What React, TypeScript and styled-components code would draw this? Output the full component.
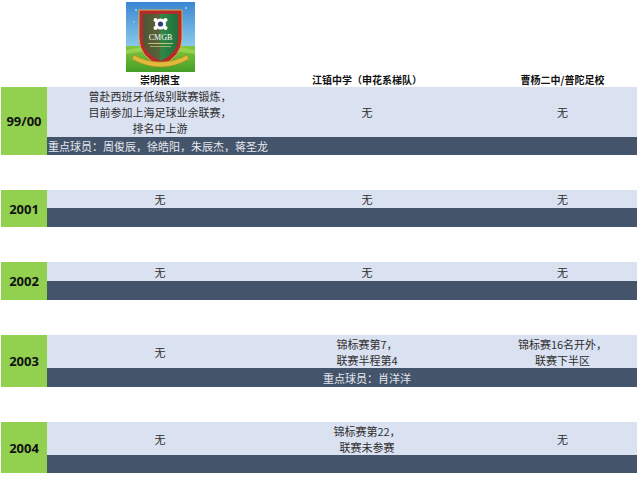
import React from "react";
import styled, { createGlobalStyle } from "styled-components";

const Global = createGlobalStyle`
  html, body { margin: 0; padding: 0; background: #ffffff; }
  body { font-family: "Noto Sans CJK SC", "Noto Sans", sans-serif; }
`;

const COLS = "226px 188px 1fr";

const Page = styled.div`
  width: 636px;
  padding-left: 1px;
  display: flex;
  flex-direction: column;
  gap: 35px;
`;

const Header = styled.div`
  display: grid;
  grid-template-columns: 46px ${COLS};
  height: 87px;
  margin-bottom: -35px;
`;

const HeadCell = styled.div<{ $shift?: number }>`
  display: flex;
  flex-direction: column;
  align-items: center;
  justify-content: flex-end;
  padding-left: ${(p) => p.$shift ?? 0}px;
`;

const HeadLabel = styled.div`
  font-size: 10px;
  font-weight: 700;
  line-height: 14px;
  color: #111;
  white-space: nowrap;
`;

const LogoBox = styled.div`
  width: 69px;
  height: 70px;
  margin-bottom: 1px;
`;

const Block = styled.div`
  display: grid;
  grid-template-columns: 46px 1fr;
`;

const Year = styled.div`
  background: #92d050;
  display: flex;
  align-items: center;
  justify-content: center;
  font-family: "Open Sans", "Noto Sans", sans-serif;
  font-weight: 700;
  font-size: 13px;
  color: #111;
`;

const Body = styled.div`
  display: flex;
  flex-direction: column;
`;

const Results = styled.div<{ $h: number }>`
  display: grid;
  grid-template-columns: ${COLS};
  height: ${(p) => p.$h}px;
  background: #dae1f1;
`;

const Cell = styled.div<{ $shift?: number }>`
  display: flex;
  flex-direction: column;
  align-items: center;
  justify-content: center;
  text-align: center;
  font-size: 11px;
  line-height: 16px;
  color: #2e2e2e;
  padding-left: ${(p) => p.$shift ?? 0}px;
  white-space: nowrap;
`;

const NoteBar = styled.div<{ $h: number }>`
  display: grid;
  grid-template-columns: ${COLS};
  height: ${(p) => p.$h}px;
  background: #44546a;
  align-items: center;
`;

const Note = styled.div<{ $span?: boolean }>`
  grid-column: ${(p) => (p.$span ? "1 / 4" : "2 / 3")};
  text-align: ${(p) => (p.$span ? "left" : "center")};
  padding-left: ${(p) => (p.$span ? "1px" : "0")};
  font-size: 11px;
  line-height: 16px;
  color: #e4e8ee;
  white-space: nowrap;
`;

const Logo = () => (
  <svg width="69" height="70" viewBox="0 0 69 70">
    <defs>
      <linearGradient id="sky" x1="0" y1="0" x2="0" y2="1">
        <stop offset="0" stopColor="#3a86d2" />
        <stop offset="0.6" stopColor="#86c6ea" />
        <stop offset="1" stopColor="#c6e8f4" />
      </linearGradient>
      <linearGradient id="grass" x1="0" y1="0" x2="0" y2="1">
        <stop offset="0" stopColor="#82c840" />
        <stop offset="1" stopColor="#459e26" />
      </linearGradient>
      <linearGradient id="shield" x1="0" y1="0" x2="1" y2="0">
        <stop offset="0" stopColor="#236f3c" />
        <stop offset="0.5" stopColor="#2f8a47" />
        <stop offset="1" stopColor="#236f3c" />
      </linearGradient>
    </defs>
    <rect width="69" height="70" fill="url(#sky)" />
    <rect y="44" width="69" height="26" fill="url(#grass)" />
    <path d="M0 48 Q34 40 69 48 L69 52 Q34 45 0 52 Z" fill="#a8dd5a" opacity="0.6" />
    <path d="M13 8 L56 8 L56 36 Q56 55 34.5 64 Q13 55 13 36 Z" fill="#b52a2a" stroke="#d9b44a" strokeWidth="1" />
    <path d="M17 12 L52 12 L52 36 Q52 51 34.5 59 Q17 51 17 36 Z" fill="url(#shield)" />
    <path d="M17 12 L34.5 12 L34.5 59 Q17 51 17 36 Z" fill="#a42424" opacity="0.35" />
    <circle cx="34.5" cy="22" r="5.5" fill="#ffffff" />
    <circle cx="34.5" cy="22" r="2.6" fill="#2a3f7a" />
    <circle cx="29.5" cy="18" r="2" fill="#ffffff" />
    <circle cx="39.5" cy="18" r="2" fill="#ffffff" />
    <circle cx="29.5" cy="26" r="2" fill="#ffffff" />
    <circle cx="39.5" cy="26" r="2" fill="#ffffff" />
    <text x="34.5" y="38" textAnchor="middle" fontFamily="Liberation Serif, serif" fontSize="8" fill="#ffffff">CMGB</text>
    <rect x="22" y="41" width="25" height="1" fill="#e8d58a" opacity="0.8" />
    <rect x="24" y="44" width="21" height="1" fill="#e8d58a" opacity="0.6" />
    <path d="M8 53 Q20 60 34.5 60 Q49 60 61 53 L63 57 Q49 65 34.5 65 Q20 65 6 57 Z" fill="#e2b93b" stroke="#a9811e" strokeWidth="0.5" />
    <circle cx="10" cy="8" r="0.8" fill="#ffffff" />
    <circle cx="60" cy="6" r="0.8" fill="#ffffff" />
    <circle cx="8" cy="20" r="0.6" fill="#ffffff" />
  </svg>
);

type Row = {
  year: string;
  h: number;
  nh: number;
  cells: string[][];
  note?: string;
  noteSpan?: boolean;
};

const rows: Row[] = [
  {
    year: "99/00",
    h: 50,
    nh: 18,
    cells: [["曾赴西班牙低级别联赛锻炼，", "目前参加上海足球业余联赛，", "排名中上游"], ["无"], ["无"]],
    note: "重点球员：周俊辰，徐皓阳，朱辰杰，蒋圣龙",
    noteSpan: true,
  },
  { year: "2001", h: 18, nh: 19, cells: [["无"], ["无"], ["无"]] },
  { year: "2002", h: 19, nh: 19, cells: [["无"], ["无"], ["无"]] },
  {
    year: "2003",
    h: 33,
    nh: 19,
    cells: [["无"], ["锦标赛第7，", "联赛半程第4"], ["锦标赛16名开外，", "联赛下半区"]],
    note: "重点球员：肖洋洋",
  },
  {
    year: "2004",
    h: 33,
    nh: 18,
    cells: [["无"], ["锦标赛第22，", "联赛未参赛"], ["无"]],
  },
];

export default function App() {
  return (
    <>
      <Global />
      <Page>
        <Header>
          <div />
          <HeadCell>
            <LogoBox>
              <Logo />
            </LogoBox>
            <HeadLabel>崇明根宝</HeadLabel>
          </HeadCell>
          <HeadCell>
            <HeadLabel>江镇中学（申花系梯队）</HeadLabel>
          </HeadCell>
          <HeadCell $shift={27}>
            <HeadLabel>曹杨二中/普陀足校</HeadLabel>
          </HeadCell>
        </Header>
        {rows.map((r) => (
          <Block key={r.year}>
            <Year>{r.year}</Year>
            <Body>
              <Results $h={r.h}>
                {r.cells.map((lines, i) => (
                  <Cell key={i} $shift={i === 2 ? 27 : 0}>
                    {lines.map((l, j) => (
                      <span key={j}>{l}</span>
                    ))}
                  </Cell>
                ))}
              </Results>
              <NoteBar $h={r.nh}>
                {r.note && <Note $span={r.noteSpan}>{r.note}</Note>}
              </NoteBar>
            </Body>
          </Block>
        ))}
      </Page>
    </>
  );
}
